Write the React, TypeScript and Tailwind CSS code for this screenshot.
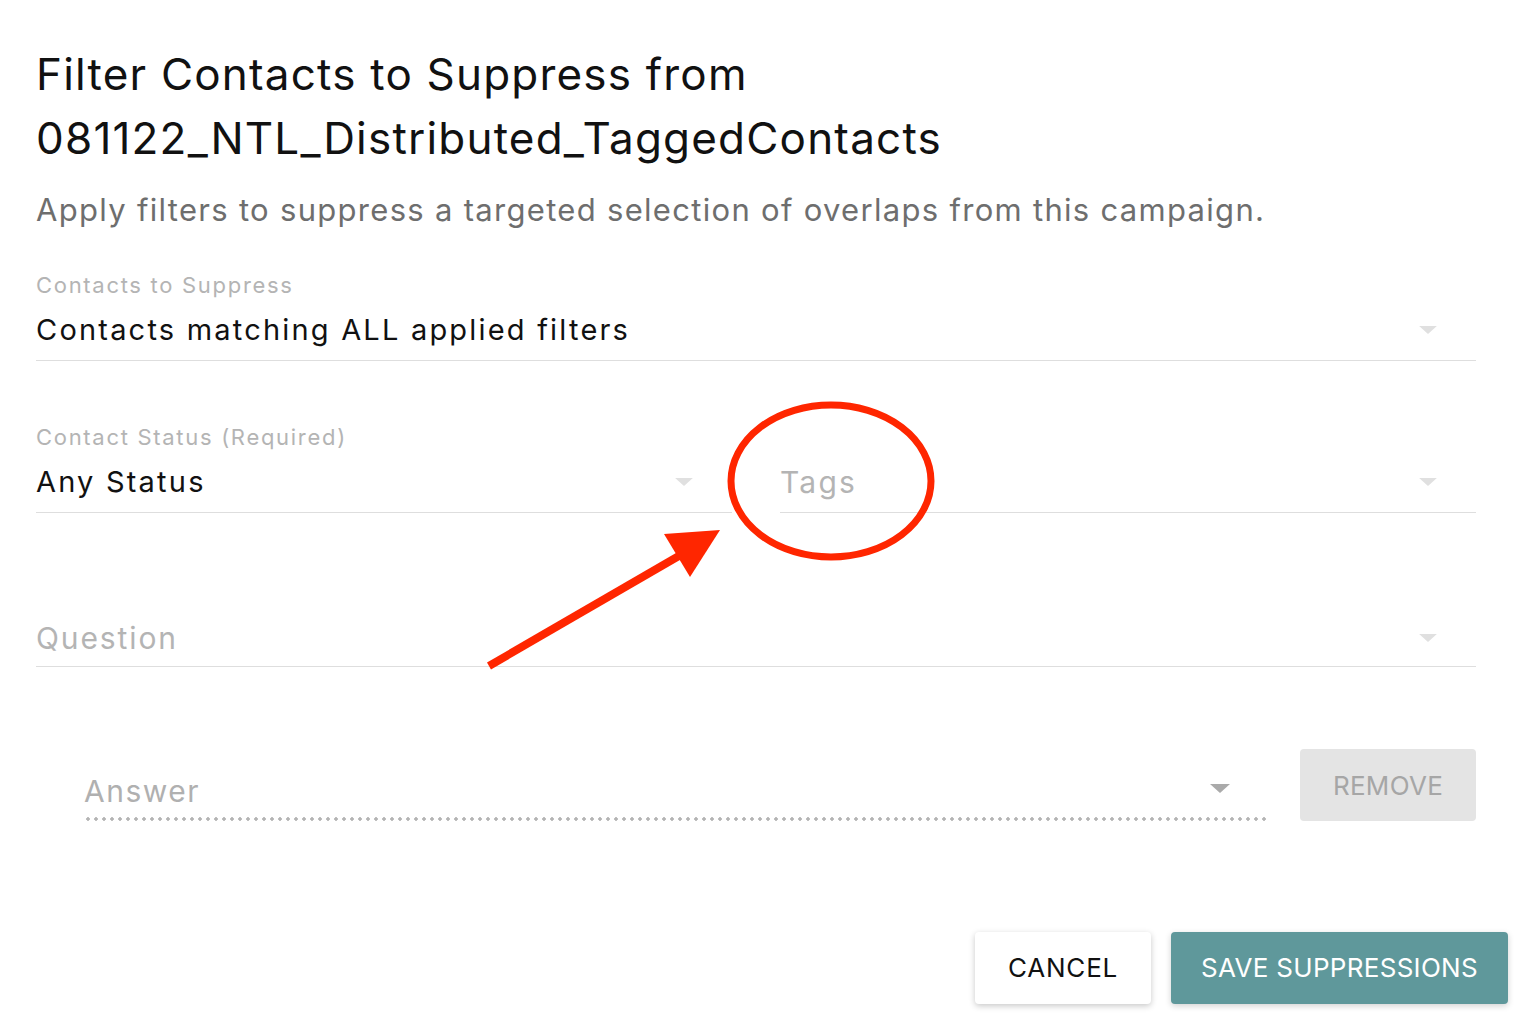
import React from "react";

const font = "font-['Inter','Liberation_Sans',sans-serif]";

function Caret({ className }: { className: string }) {
  return (
    <svg viewBox="0 0 20 9" className={className} aria-hidden>
      <path d="M0 0h20L10 9z" fill="currentColor" />
    </svg>
  );
}

function SelectField({
  label,
  value,
  placeholder,
}: {
  label?: string;
  value?: string;
  placeholder?: string;
}) {
  return (
    <div className="flex flex-col">
      <div className="h-[30px] text-[22px] leading-[30px] tracking-[1.7px] text-[#b4b4b4]">{label}</div>
      <div className="mt-[10px] flex items-center border-b border-[#dedede] pb-[10px]">
        {value ? (
          <span className="flex-1 text-[29px] leading-[40px] tracking-[2.2px] text-[#111]">{value}</span>
        ) : (
          <span className="flex-1 text-[30px] leading-[40px] tracking-[2.2px] text-[#b4b4b4]">{placeholder}</span>
        )}
        <Caret className="mr-[39px] h-[8px] w-[18px] text-[#e0e0e0]" />
      </div>
    </div>
  );
}

export default function App() {
  return (
    <div className={`relative h-[1016px] w-[1518px] overflow-hidden bg-white ${font}`}>
      <div className="flex flex-col pl-[36px] pr-[42px] pt-[42px]">
        <h1 className="text-[44px] font-normal leading-[64px] tracking-[1.2px] text-[#111]">
          Filter Contacts to Suppress from
          <br />
          081122_NTL_Distributed_TaggedContacts
        </h1>
        <p className="mt-[18px] text-[31px] leading-[44px] tracking-[1.3px] text-[#6e6e6e]">
          Apply filters to suppress a targeted selection of overlaps from this campaign.
        </p>

        <div className="mt-[38px]">
          <SelectField label="Contacts to Suppress" value="Contacts matching ALL applied filters" />
        </div>

        <div className="mt-[61px] grid grid-cols-2 gap-[48px]">
          <SelectField label="Contact Status (Required)" value="Any Status" />
          <SelectField placeholder="Tags" />
        </div>

        <div className="mt-[105px]">
          <div className="flex items-center border-b border-[#dedede] pb-[8px]">
            <span className="flex-1 text-[30px] leading-[40px] tracking-[1.9px] text-[#b4b4b4]">Question</span>
            <Caret className="mr-[39px] h-[8px] w-[18px] text-[#e0e0e0]" />
          </div>
        </div>

        <div className="mt-[82px] flex items-start pl-[48px]">
          <div className="flex w-[1182px] flex-col pt-[22px]">
            <div className="flex items-center">
              <span className="flex-1 text-[30px] leading-[40px] tracking-[1.5px] text-[#b0b0b0]">Answer</span>
              <Caret className="mb-[6px] mr-[36px] h-[9px] w-[20px] text-[#aaaaaa]" />
            </div>
            <div className="mt-[6px] h-[4px] w-full bg-[radial-gradient(circle,#b4b4b4_1.5px,transparent_2px)] bg-[length:8px_4px] bg-repeat-x" />
          </div>
          <button className="ml-[34px] flex h-[72px] w-[176px] items-center justify-center rounded-[4px] bg-[#e4e4e4] text-[26px] tracking-[0.3px] text-[#a6a6a6]">
            REMOVE
          </button>
        </div>
      </div>

      <div className="mt-[111px] flex justify-end gap-[20px] pr-[10px]">
        <button className="flex h-[72px] w-[176px] items-center justify-center rounded-[4px] bg-white pb-[2px] text-[26px] tracking-[0.8px] text-[#111] shadow-[0_2px_6px_rgba(0,0,0,0.22)]">
          CANCEL
        </button>
        <button className="flex h-[72px] w-[337px] items-center justify-center rounded-[4px] bg-[#5f989b] pb-[2px] text-[26px] tracking-[0.3px] text-white shadow-[0_2px_6px_rgba(0,0,0,0.18)]">
          SAVE SUPPRESSIONS
        </button>
      </div>

      <svg className="pointer-events-none absolute left-0 top-0" width="1518" height="1016" aria-hidden>
        <ellipse cx="831" cy="481" rx="100" ry="76" fill="none" stroke="#ff2600" strokeWidth="7" />
        <line x1="489" y1="666" x2="684" y2="553" stroke="#ff2600" strokeWidth="8" />
        <polygon points="664,534 720,530 690,577" fill="#ff2600" />
      </svg>
    </div>
  );
}
